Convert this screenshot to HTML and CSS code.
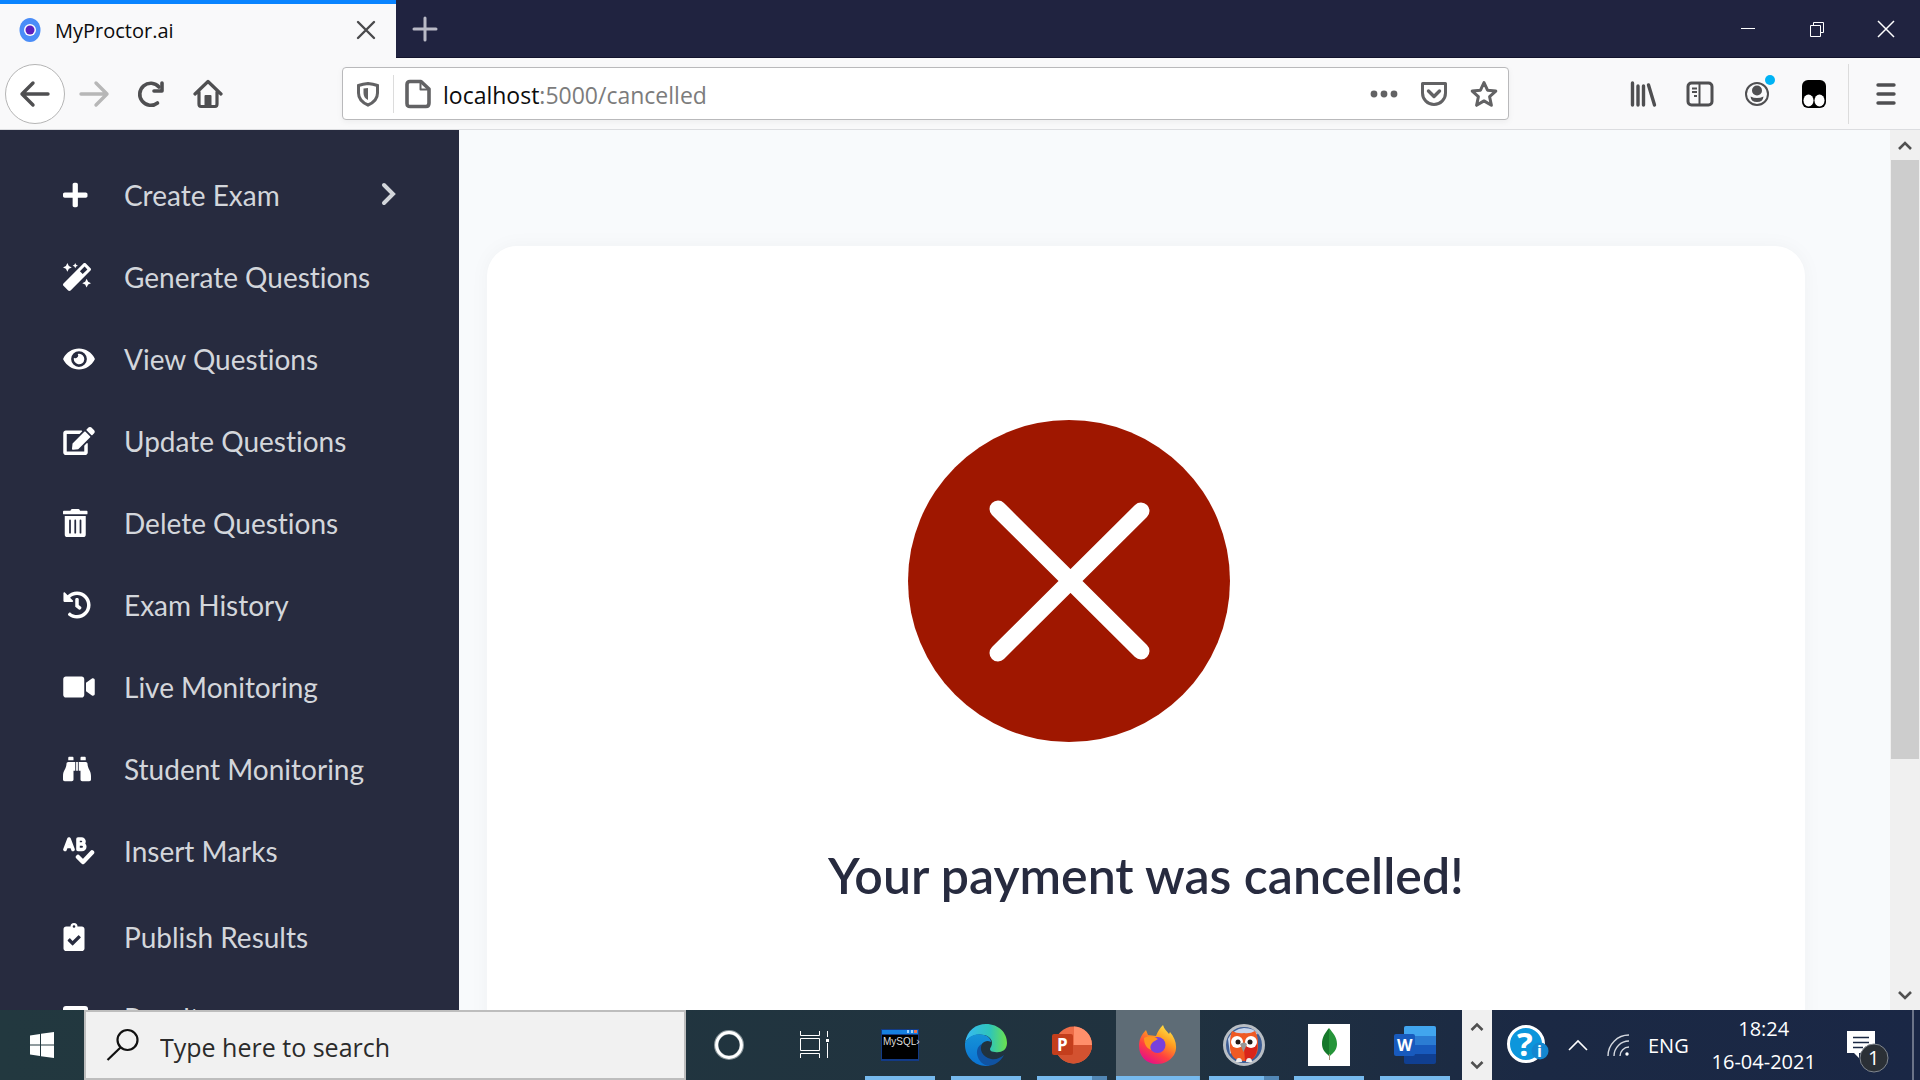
FILE: index.html
```html
<!DOCTYPE html>
<html lang="en">
<head>
<meta charset="utf-8">
<title>MyProctor.ai</title>
<link rel="stylesheet" href="styles.css">
</head>
<body>
<header class="browser">
  <div class="tabbar">
    <div class="tab">
      <svg class="favicon" width="22" height="24" viewBox="0 0 22 24"><ellipse cx="11" cy="12" rx="10.500" ry="12" fill="#4a8df8"/><circle cx="11" cy="12" r="6" fill="#fff"/><circle cx="11" cy="12" r="4.500" fill="#5a1fc0"/></svg>
      <span class="tab-title">MyProctor.ai</span>
      <button class="plain" aria-label="Close tab"><svg width="20" height="20" viewBox="0 0 20 20" fill="none" stroke="#4a4a4c" stroke-width="2.400" stroke-linecap="round"><path d="M2 2l16 16M18 2L2 18"/></svg></button>
    </div>
    <button class="plain new-tab" aria-label="New tab"><svg width="26" height="26" viewBox="0 0 26 26" fill="none" stroke="#b9bac6" stroke-width="3" stroke-linecap="round"><path d="M13 2v22M2 13h22"/></svg></button>
    <div class="window-buttons">
      <button class="plain" aria-label="Minimise"><svg width="16" height="16" viewBox="0 0 16 16" fill="none" stroke="#fff"><path d="M1 7.500h14"/></svg></button>
      <button class="plain" aria-label="Restore"><svg width="16" height="16" viewBox="0 0 16 16" fill="none" stroke="#fff"><path d="M1.500 4.500h10v11h-10zM4.500 4.500v-3h10v10h-3"/></svg></button>
      <button class="plain" aria-label="Close"><svg width="18" height="18" viewBox="0 0 18 18" fill="none" stroke="#fff" stroke-width="1.500"><path d="M1 1l16 16M17 1L1 17"/></svg></button>
    </div>
  </div>
  <div class="toolbar">
    <div class="nav-buttons">
      <button class="plain back" aria-label="Back"><svg width="32" height="28" viewBox="0 0 32 28" fill="none" stroke="#4f4f51" stroke-width="3.400" stroke-linecap="round" stroke-linejoin="round"><path d="M29 14H3M14 3L3 14l11 11"/></svg></button>
      <button class="plain" aria-label="Forward"><svg width="32" height="28" viewBox="0 0 32 28" fill="none" stroke="#b7b7b7" stroke-width="3.400" stroke-linecap="round" stroke-linejoin="round"><path d="M3 14h26M18 3l11 11-11 11"/></svg></button>
      <button class="plain" aria-label="Reload"><svg width="30" height="30" viewBox="0 0 30 30" fill="none" stroke="#4f4f51" stroke-width="3.600" stroke-linecap="round"><path d="M21.500 24A11 11 0 1 1 23 8"/><path d="M26 4v8h-8" stroke-linejoin="round"/></svg></button>
      <button class="plain" aria-label="Home"><svg width="30" height="30" viewBox="0 0 30 30" fill="none" stroke="#4f4f51" stroke-width="3.200" stroke-linecap="round" stroke-linejoin="round"><path d="M2 15L15 2.500 28 15M6 13v12q0 2.500 2 2.500h14q2 0 2-2.500V13"/><path d="M12.500 27v-10h5v10z" fill="#4f4f51" stroke-width="2"/></svg></button>
    </div>
    <div class="urlbar">
      <svg width="24" height="26" viewBox="0 0 24 26"><path d="M12 2.500Q17 3 21.500 4.500V12q0 8-9.500 12Q2.500 20 2.500 12V4.500Q7 3 12 2.500z" fill="none" stroke="#626264" stroke-width="3"/><path d="M12 7v12q-4.500-2-4.500-7V7.500z" fill="#626264"/></svg>
      <span class="divider"></span>
      <svg width="26" height="30" viewBox="0 0 26 30" fill="none" stroke="#626264" stroke-width="3.600" stroke-linejoin="round"><path d="M5 2.500h11l8 7.500v14q0 3.500-3 3.500H5q-3 0-3-3V5.500q0-3 3-3z"/><path d="M15.500 3v7.500H23" stroke-width="2"/></svg>
      <span class="url"><b>localhost</b>:5000/cancelled</span>
      <button class="plain" aria-label="Page actions"><svg width="28" height="10" viewBox="0 0 28 10" fill="#626264"><circle cx="4" cy="5" r="3.400"/><circle cx="14" cy="5" r="3.400"/><circle cx="24" cy="5" r="3.400"/></svg></button>
      <button class="plain" aria-label="Save to Pocket"><svg width="28" height="26" viewBox="0 0 28 26" fill="none" stroke="#626264" stroke-width="3" stroke-linecap="round" stroke-linejoin="round"><path d="M2.500 2.500h23V12a11.500 11.500 0 0 1-23 0z"/><path d="M8.500 10l5.500 5.500L19.500 10" stroke-width="3.400"/></svg></button>
      <button class="plain" aria-label="Bookmark"><svg width="28" height="28" viewBox="0 0 28 28" fill="none" stroke="#626264" stroke-width="3" stroke-linejoin="round"><path d="M14 2.500l3.500 7.700 8.300.9-6.200 5.600 1.800 8.600-7.400-4.400-7.400 4.400 1.800-8.600L2.200 11.100l8.300-.9z"/></svg></button>
    </div>
    <div class="tools">
      <button class="plain" aria-label="Library"><svg width="28" height="28" viewBox="0 0 28 28" fill="none" stroke="#4f4f51" stroke-width="3.400" stroke-linecap="round"><path d="M3.500 3v22M9 6v19M14.500 6v19M19.500 5l6 20"/></svg></button>
      <button class="plain" aria-label="Sidebars"><svg width="28" height="26" viewBox="0 0 28 26" fill="none" stroke="#4f4f51" stroke-width="3"><rect x="2" y="2" width="24" height="22" rx="3.500"/><path d="M13.500 3v20" stroke-width="2"/><path d="M6 7.500h5M6 11h5M8 15h3" stroke-width="1.800"/></svg></button>
      <button class="plain account" aria-label="Account"><svg width="26" height="26" viewBox="0 0 26 26"><circle cx="13" cy="13" r="11" fill="none" stroke="#4f4f51" stroke-width="2"/><circle cx="13" cy="9.500" r="5" fill="#4f4f51"/><path d="M6.500 15.500q6.500 3 13 0Q19 21 13 21t-6.500-5.500z" fill="#4f4f51"/></svg><i class="dot"></i></button>
      <button class="plain" aria-label="Extension"><svg width="26" height="28" viewBox="0 0 26 28"><rect x="1" width="24" height="28" rx="6" fill="#000"/><ellipse cx="7.500" cy="20.500" rx="5" ry="6" fill="#fff"/><ellipse cx="18.500" cy="20.500" rx="5" ry="6" fill="#fff"/></svg></button>
      <span class="divider tall"></span>
      <button class="plain" aria-label="Menu"><svg width="22" height="24" viewBox="0 0 22 24" stroke="#4f4f51" stroke-width="3.400" stroke-linecap="round"><path d="M3 3h16M3 12h16M3 21h16"/></svg></button>
    </div>
  </div>
</header>

<div class="page">
  <nav class="sidebar">
    <a href="#"><svg width="28" height="28" viewBox="0 0 448 512" preserveAspectRatio="xMinYMid"><path d="M416 208H272V64c0-18-14-32-32-32h-32c-18 0-32 14-32 32v144H32c-18 0-32 14-32 32v32c0 18 14 32 32 32h144v144c0 18 14 32 32 32h32c18 0 32-14 32-32V304h144c18 0 32-14 32-32v-32c0-18-14-32-32-32z"/></svg><span>Create Exam</span><svg class="chevron" width="18" height="28" viewBox="0 0 18 28"><path d="M5 4l9 9-9 9" fill="none" stroke="#d3d6db" stroke-width="4" stroke-linecap="round"/></svg></a>
    <a href="#"><svg width="28" height="28" viewBox="0 0 512 512"><path d="M224 96l16-32 32-16-32-16-16-32-16 32-32 16 32 16zM80 160l27-53 53-27-53-27L80 0 53 53 0 80l53 27zM432 288l-27 53-53 27 53 27 27 53 27-53 53-27-53-27zM503 94L418 9c-6-6-15-9-23-9s-16 3-22 9L9 373c-12 13-12 33 0 45l85 85c6 6 14 9 22 9s17-3 23-9l364-364c12-12 12-33 0-45zM360 203l-51-51 86-86 51 51z"/></svg><span>Generate Questions</span></a>
    <a href="#"><svg width="32" height="28" viewBox="0 0 576 512"><path d="M573 241C518 136 411 64 288 64S58 136 3 241a32 32 0 0 0 0 30c55 105 162 177 285 177s230-72 285-177a32 32 0 0 0 0-30zM288 400a144 144 0 1 1 144-144 144 144 0 0 1-144 144zm0-240a95 95 0 0 0-25 4 48 48 0 0 1-67 67 96 96 0 1 0 92-71z"/></svg><span>View Questions</span></a>
    <a href="#"><svg width="32" height="28" viewBox="0 0 576 512"><path d="M403 83l90 90c4 4 4 10 0 14L274 406l-93 10c-12 2-23-9-21-21l10-93L389 83c4-4 10-4 14 0zm162-23l-49-49c-15-15-40-15-55 0l-35 35c-4 4-4 10 0 14l90 90c4 4 10 4 14 0l35-35c15-15 15-40 0-55zM384 346v102H64V128h230c3 0 6-1 9-4l40-40c7-7 2-20-9-20H48C22 64 0 86 0 112v352c0 26 22 48 48 48h352c26 0 48-22 48-48V306c0-11-13-16-20-9l-40 40c-3 3-4 6-4 9z"/></svg><span>Update Questions</span></a>
    <a href="#"><svg width="28" height="28" viewBox="0 0 448 512" preserveAspectRatio="xMinYMid"><path fill-rule="evenodd" d="M32 464a48 48 0 0 0 48 48h288a48 48 0 0 0 48-48V128H32zm272-256a16 16 0 0 1 32 0v224a16 16 0 0 1-32 0zm-96 0a16 16 0 0 1 32 0v224a16 16 0 0 1-32 0zm-96 0a16 16 0 0 1 32 0v224a16 16 0 0 1-32 0zM432 32H312l-9-19A24 24 0 0 0 281 0H167a24 24 0 0 0-22 13l-9 19H16A16 16 0 0 0 0 48v32a16 16 0 0 0 16 16h416a16 16 0 0 0 16-16V48a16 16 0 0 0-16-16z"/></svg><span>Delete Questions</span></a>
    <a href="#"><svg width="28" height="28" viewBox="0 0 512 512"><path d="M504 255c0 137-111 249-248 249-59 0-114-21-156-55-11-9-12-26-2-36l11-11c9-9 22-10 32-2 32 25 72 40 115 40 102 0 184-82 184-184S358 72 256 72c-49 0-93 19-126 50l51 51c10 10 3 27-11 27H24c-9 0-16-7-16-16V38c0-14 17-21 27-11l49 49C129 34 190 8 256 8c137 0 248 111 248 247zM323 334l10-13c8-10 6-25-4-33l-41-32V152c0-13-11-24-24-24h-16c-13 0-24 11-24 24v135l65 51c10 8 25 6 34-4z"/></svg><span>Exam History</span></a>
    <a href="#"><svg width="32" height="28" viewBox="0 0 576 512"><path d="M336 64H48C22 64 0 86 0 112v288c0 26 22 48 48 48h288c27 0 48-22 48-48V112c0-26-21-48-48-48zm189 38l-109 75v158l109 75c21 15 51 0 51-26V128c0-26-30-41-51-26z"/></svg><span>Live Monitoring</span></a>
    <a href="#"><svg width="28" height="28" viewBox="0 0 512 512"><path d="M416 48c0-9-7-16-16-16h-64c-9 0-16 7-16 16v48h96zM64 160C61 257 1 277 0 384v64c0 18 14 32 32 32h128c18 0 32-14 32-32V288h32V128H96c-18 0-32 14-32 32zm448 224c-1-107-61-127-64-224 0-18-14-32-32-32H288v160h32v160c0 18 14 32 32 32h128c18 0 32-14 32-32zM176 32h-64c-9 0-16 7-16 16v48h96V48c0-9-7-16-16-16zm64 256h32V128h-32z"/></svg><span>Student Monitoring</span></a>
    <a href="#"><svg width="32" height="28" viewBox="0 0 32 28"><path fill="none" stroke="#fff" stroke-width="3.600" stroke-linecap="round" stroke-linejoin="round" d="M2 12.500L6 2l4 10.500M4 9.500h4M15 2v10.500h4a2.500 2.500 0 0 0 0-5.500h-4 3.500a2.400 2.400 0 0 0 0-5z"/><path d="M15 20l5 5 9-9.500" fill="none" stroke="#fff" stroke-width="4.500" stroke-linecap="round" stroke-linejoin="round"/></svg><span>Insert Marks</span></a>
    <a href="#" class="publish"><svg width="22" height="28" viewBox="0 0 384 512"><path d="M336 64h-80a64 64 0 0 0-128 0H48C22 64 0 86 0 112v352c0 26 22 48 48 48h288c26 0 48-22 48-48V112c0-26-22-48-48-48zM192 40a24 24 0 1 1 0 48 24 24 0 0 1 0-48zm121 231L175 408c-5 5-12 5-17 0l-79-80c-5-5-5-12 0-17l27-27c5-5 13-5 17 0l43 44 102-101c5-5 12-5 17 0l28 27c5 5 5 12 0 17z"/></svg><span>Publish Results</span></a>
    <a href="#" class="last"><svg width="28" height="28" viewBox="0 0 28 28"><rect y="2" width="25" height="24" rx="3"/></svg><span>Results</span></a>
  </nav>
  <main class="content">
    <section class="card">
      <svg class="cancel-icon" width="322" height="322" viewBox="0 0 322 322"><circle cx="161" cy="161" r="161" fill="#9f1700"/><path d="M90 89l143 142M233 91L90 233" stroke="#fff" stroke-width="17" stroke-linecap="round"/></svg>
      <h1>Your payment was cancelled!</h1>
    </section>
  </main>
  <div class="scrollbar">
    <svg width="30" height="30" viewBox="0 0 30 30" fill="none" stroke="#505050" stroke-width="2.600"><path d="M9 19l6-6 6 6"/></svg>
    <div class="track"><div class="thumb"></div></div>
    <svg width="30" height="30" viewBox="0 0 30 30" fill="none" stroke="#505050" stroke-width="2.600"><path d="M9 12l6 6 6-6"/></svg>
  </div>
</div>

<footer class="taskbar">
  <button class="plain start" aria-label="Start"><svg width="24" height="26" viewBox="0 0 24 26" fill="#fff"><path d="M0 3.500L10 2v10.500H0zM11 1.800L24 0v12.500H11zM0 13.500h10V24L0 22.500zM11 13.500h13V26l-13-1.800z"/></svg></button>
  <label class="search"><svg width="34" height="34" viewBox="0 0 34 34" fill="none" stroke="#111" stroke-width="2.200"><circle cx="21.500" cy="12" r="10"/><path d="M14.500 19.500L1.500 32"/></svg><input type="text" placeholder="Type here to search" aria-label="Search"></label>
  <div class="apps">
    <button class="plain app" aria-label="Cortana"><svg width="32" height="32" viewBox="0 0 32 32"><circle cx="16" cy="16" r="12.800" fill="none" stroke="#8a979c" stroke-width="4.400"/><circle cx="16" cy="16" r="12.400" fill="none" stroke="#fff" stroke-width="3"/></svg></button>
    <button class="plain app" aria-label="Task view"><svg width="30" height="28" viewBox="0 0 30 28" fill="none" stroke="#fff"><path d="M.5 0v4.500h19V0M.5 7.500h19v12H.5zM.5 27v-4.500h19V27M27.500 0v6M27.500 12v15"/><path d="M26 8h3v3h-3z" fill="#fff" stroke="none"/></svg></button>
    <button class="plain app open"><svg width="40" height="34" viewBox="0 0 40 34"><rect x="1" y="1" width="38" height="32" fill="#123a86"/><rect x="2" y="2" width="36" height="4" fill="#1680e0"/><path d="M27 2h2v3h-2zM31 2h2v3h-2z" fill="#9cd0ff"/><path d="M34 2h3v3h-3z" fill="#ef7350"/><rect x="2" y="7" width="36" height="24" fill="#000"/><text x="3" y="17" class="mysql">MySQL›</text></svg></button>
    <button class="plain app open" aria-label="Edge"><svg width="42" height="42" viewBox="0 0 42 42"><defs><linearGradient id="eg" x1="0" x2="1"><stop stop-color="#36b8f5"/><stop offset=".6" stop-color="#2fc5b8"/><stop offset="1" stop-color="#6ce24c"/></linearGradient><linearGradient id="eb" x2="0" y2="1"><stop stop-color="#1593d8"/><stop offset="1" stop-color="#0b72d2"/></linearGradient></defs><path d="M0 19C2 6 11 0 21 0c13 0 21 9 21 19 0 8-7 10-12 9-5 0-6-3-4-5 3-6-1-11-7-12C10 9 3 13 0 19z" fill="url(#eg)"/><path d="M0 19c4-8 12-10 19-8 4 1 7 4 7 7-5-3-11 1-11 8 0 7 4 13 10 15.500C12 44 0 34 0 21z" fill="url(#eb)"/><path d="M17 20c-3 5 0 13 9 15 5 1 9-1 13-4-4 8-11 11-17 10.500C12 39 8 24 17 20z" fill="#1053a2"/></svg></button>
    <button class="plain app open multi"><svg width="40" height="38" viewBox="0 0 40 38"><circle cx="21.500" cy="19" r="18.500" fill="#ed6c47"/><path d="M22 .5A18.500 18.500 0 0 1 40 19H22z" fill="#ff8f6b"/><path d="M3 19h37a18.500 18.500 0 0 1-37 0z" fill="#d35230"/><rect y="8" width="21" height="21" rx="2" fill="#c43e1c"/><text x="5" y="25" class="glyph">P</text></svg></button>
    <button class="plain app open active" aria-label="Firefox"><svg width="38" height="40" viewBox="0 0 38 40"><defs><linearGradient id="ff" x1=".9" y1="0" x2=".3" y2="1"><stop stop-color="#fff44f"/><stop offset=".4" stop-color="#ff9a20"/><stop offset=".7" stop-color="#ff4040"/><stop offset="1" stop-color="#e3108a"/></linearGradient></defs><path d="M24 0c1 4 4 6 6 9l1-2c6 7 8 16 4 23-4 6-10 9-17 9C7 39 0 31 0 21 0 15 2 10 7 5l2 5 8 1c2-5 4-8 7-11z" fill="url(#ff)"/><circle cx="18.500" cy="20" r="8" fill="#7840dc"/><path d="M5 13c5-3 10-2 14 1l-5 3q-4 4-2 8c-5-2-7-7-7-12z" fill="#ff9620"/></svg></button>
    <button class="plain app open multi" aria-label="Owl"><svg width="42" height="42" viewBox="0 0 42 42"><circle cx="21" cy="21" r="19.500" fill="#3d5d94" stroke="#b9bec4" stroke-width="3"/><path d="M5 15Q10 5 21 4q10 0 14 6L20 14 7 30z" fill="#c7d5ec"/><path d="M9 7q6 3 12 2 6 1 11-2 3 5 3 12 1 18-14 18T7 20Q7 12 9 7z" fill="#ef5a24"/><path d="M21 24l13-7q2 20-12 20z" fill="#d9251a"/><circle cx="14" cy="18" r="6" fill="#fff"/><circle cx="28" cy="18" r="6" fill="#fff"/><circle cx="15" cy="18" r="2.500" fill="#231a18"/><circle cx="27" cy="18" r="2.500" fill="#231a18"/><path d="M17 20q4-3 7 0l-3.500 8z" fill="#979797"/><path d="M13 38q0-4 3-4t3 4zM23 38q0-4 3-4t3 4z" fill="#eee"/></svg></button>
    <button class="plain app open" aria-label="MongoDB"><svg width="42" height="42" viewBox="0 0 42 42"><path fill="#fff" d="M0 0h42v42H0z"/><path d="M21 4c4 5 8 9 8 16 0 6-4 9-7 12l-1 4V4z" fill="#259439"/><path d="M21 4c-4 5-7 9-7 16 0 6 4 9 7 12z" fill="#16792b"/><path d="M21.500 30v6" stroke="#a69476"/></svg></button>
    <button class="plain app open"><svg width="42" height="38" viewBox="0 0 42 38"><rect x="10" width="32" height="38" rx="2" fill="#103f91"/><path d="M10 19h32v9H10z" fill="#185abd"/><path d="M10 10h32v9H10z" fill="#2b7cd3"/><path d="M12 0h28q2 0 2 2v8H10V2q0-2 2-2z" fill="#41a5ee"/><rect y="8" width="21" height="22" rx="2" fill="#185abd"/><text x="3" y="25" class="glyph word">W</text></svg></button>
  </div>
  <div class="spin"><svg width="14" height="10" viewBox="0 0 14 10" fill="none" stroke="#505050" stroke-width="2.600"><path d="M1.500 8L7 2.500 12.500 8"/></svg><svg width="14" height="10" viewBox="0 0 14 10" fill="none" stroke="#505050" stroke-width="2.600"><path d="M1.500 2L7 7.500 12.500 2"/></svg></div>
  <div class="tray">
    <svg class="help-icon" width="42" height="40" viewBox="0 0 42 40"><circle cx="19" cy="19" r="17.500" fill="#0c96dc" stroke="#fff" stroke-width="3"/><text x="10" y="31" class="help">?</text><circle cx="33" cy="26" r="8.500" fill="#1487d0"/><text x="30" y="32" class="info">i</text></svg>
    <svg width="20" height="12" viewBox="0 0 20 12" fill="none" stroke="#fff" stroke-width="1.600"><path d="M1 11l9-9 9 9"/></svg>
    <svg width="22" height="22" viewBox="0 0 22 22" fill="none" stroke="#d5d9e0" stroke-width="1.400"><path d="M1 22A21 21 0 0 1 22 1M7 22A15 15 0 0 1 22 7M13 22a9 9 0 0 1 9-9"/><circle cx="20" cy="20" r="1.700" fill="#fff" stroke="none"/></svg>
    <span class="lang">ENG</span>
    <div class="clock"><span>18:24</span><span>16-04-2021</span></div>
    <button class="plain notify" aria-label="Notifications"><svg width="44" height="44" viewBox="0 0 44 44"><path d="M1 1h28v22H17l-4 0-0 5-5-5H1z" fill="#fff"/><path d="M7 7.500h16M7 12.500h16M7 17.500h10" stroke="#1b2944" stroke-width="1.500"/><circle cx="28" cy="28" r="14" fill="#2b3036" stroke="#80868e"/><text x="22" y="35" class="count">1</text></svg></button>
    <span class="peek"></span>
  </div>
</footer>
</body>
</html>
```
FILE: styles.css
```css
* { box-sizing: border-box; }
html, body { height: 100%; margin: 0; }
body {
  display: flex;
  flex-direction: column;
  overflow: hidden;
  font-family: "Open Sans", "Noto Sans", sans-serif;
  background: #f8fafc;
}
svg { display: block; flex: none; }
.plain { display: flex; align-items: center; justify-content: center; padding: 0; border: 0; background: none; font: inherit; }

.tabbar { display: flex; height: 58px; background: #202340; border-bottom: 1px solid #12132c; }
.tab { display: flex; align-items: center; width: 396px; height: 58px; padding: 0 20px 2px 19px; border-top: 4px solid #0a84ff; background: #f9f9fa; }
.tab-title { flex: 1; margin-left: 14px; font-size: 20px; color: #0c0c0d; }
.new-tab { width: 58px; }
.window-buttons { display: flex; margin-left: auto; }
.window-buttons .plain { width: 69px; }

.toolbar { display: flex; align-items: center; height: 72px; padding: 0 22px 0 5px; background: #f9f9fa; border-bottom: 1px solid #dcdde0; }
.nav-buttons { display: flex; align-items: center; width: 337px; }
.nav-buttons .plain { width: 57px; height: 60px; }
.nav-buttons .back { width: 60px; border: 1px solid #b5b5b5; border-radius: 50%; background: #fff; }
.urlbar { display: flex; flex: 1; align-items: center; height: 53px; padding: 0 10px 0 13px; border: 1px solid #b9b9bb; border-radius: 4px; background: #fff; box-shadow: 0 2px 6px #0000000d; }
.divider { width: 1px; height: 38px; margin: 0 11px 0 13px; background: #dcdcdc; }
.url { flex: 1; margin-left: 12px; padding-top: 2px; font-size: 23px; color: #7c7c7c; }
.url b { font-weight: 400; color: #0c0c0d; }
.urlbar .plain { margin-left: 22px; }
.tools { display: flex; align-items: center; justify-content: flex-end; width: 389px; }
.tools .plain { width: 28px; margin-right: 29px; }
.tools .plain:last-child { margin: 0 -2px 0 0; }
.tall { height: 60px; margin: 0 23px 0 -9px; }
.account { position: relative; }
.dot { position: absolute; top: -6px; right: -4px; width: 10px; height: 10px; border-radius: 50%; background: #00b3f4; }

.page { display: flex; flex: 1; min-height: 0; }
.sidebar { width: 459px; overflow: hidden; padding-top: 24px; background: #272b3f; }
.sidebar a { display: flex; align-items: center; height: 82px; padding: 0 62px 0 63px; color: #d3d6db; font-family: Lato, sans-serif; font-size: 28px; font-variant-ligatures: none; text-decoration: none; }
.sidebar a > svg:first-child { fill: #fff; }
.sidebar a > svg[width="28"] + span { margin-left: 33px; }
.sidebar a > svg[width="32"] + span { margin-left: 29px; }
.sidebar a > svg[width="22"] + span { margin-left: 39px; }
.sidebar .publish { height: 90px; }
.sidebar .last { height: 72px; }
.chevron { margin-left: auto; }
.content { flex: 1; min-width: 0; overflow: hidden; padding: 116px 85px 0 28px; }
.card { display: flex; flex-direction: column; align-items: center; height: 100%; min-height: 900px; padding-top: 174px; border-radius: 30px; background: #fff; box-shadow: 0 0 20px #0000000a; }
.cancel-icon { margin-right: 155px; }
h1 { margin: 100px 0 0; color: #272b3f; font-family: Lato, sans-serif; font-size: 50px; font-weight: 600; line-height: 66px; }
.scrollbar { display: flex; flex-direction: column; width: 30px; background: #f0f0f0; }
.track { flex: 1; padding: 0 1px; }
.thumb { height: 73%; background: #cdcdcd; }

.taskbar { display: flex; height: 70px; color: #fff; background: linear-gradient(90deg, #22383f, #20323f 60%, #1b2944 80%, #1a2745); }
.start { width: 84px; }
.search { display: flex; align-items: center; width: 602px; padding-left: 20px; border: 2px solid #bdbdbd; background: #f1f1f1; }
.search input { flex: 1; margin-left: 20px; padding: 3px 0 0; border: 0; outline: 0; background: none; font: 25px "Open Sans", sans-serif; }
.search input::placeholder { color: #2b2b2b; }
.apps { display: flex; flex: 1; padding-right: 4px; }
.app { flex: 1; min-width: 0; margin: 0 1px; }
.app.open { background: linear-gradient(#76b9ed, #76b9ed) center bottom / 70px 4px no-repeat; }
.app.multi { background: linear-gradient(90deg, #76b9ed 78%, #5287b5 78%) center bottom / 70px 4px no-repeat; }
.app.active { background: linear-gradient(#76b9ed, #76b9ed) bottom / 100% 4px no-repeat #5e6c76; }
.mysql { font: 10px "Liberation Sans", sans-serif; fill: #ddd; }
.glyph { font: 700 17px "Open Sans", sans-serif; fill: #fff; }
.word { font-size: 16px; }
.help-icon { overflow: visible; }
.help { font: 700 33px "Open Sans", sans-serif; fill: #fff; }
.info { font: 700 16px "Open Sans", sans-serif; fill: #fff; }
.count { font: 20px "Open Sans", sans-serif; fill: #fff; }
.spin { display: flex; flex-direction: column; align-items: center; justify-content: space-between; width: 30px; padding: 12px 0 10px; background: #f0f0f0; }
.tray { display: flex; align-items: center; width: 428px; padding-left: 15px; gap: 19px; font-size: 20px; }
.clock { display: flex; flex-direction: column; align-items: center; width: 112px; line-height: 33px; }
.notify { margin: 14px 0 0 7px; }
.peek { width: 2px; height: 70px; margin-left: auto; margin-right: 6px; background: #6b7488; }
```
